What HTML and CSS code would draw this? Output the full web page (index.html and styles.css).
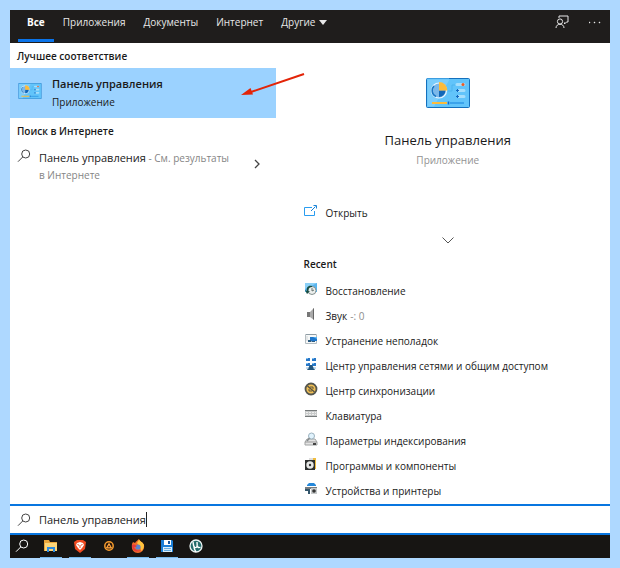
FILE: index.html
```html
<!DOCTYPE html>
<html lang="ru">
<head>
<meta charset="utf-8">
<title>Поиск</title>
<link rel="stylesheet" href="styles.css">
</head>
<body>
<svg class="defs" aria-hidden="true">
  <symbol id="panel" viewBox="0 0 44 30">
    <rect x=".5" y=".5" width="43" height="29" rx="1" fill="#62c4fa" stroke="#1470bd"/>
    <path d="M1.500 1.500h22L8 28.500H1.500z" fill="#8fd6fc" opacity=".55"/>
    <path d="M1 .5h22" stroke="#3c9de0"/>
    <circle cx="13" cy="12.500" r="7.500" fill="#7bb8ea" stroke="#e9f6ff" stroke-width="1.200"/>
    <path d="M13 12.500h6.500A6.500 6.500 0 0 1 13 19z" fill="#1267b8"/>
    <path d="M8 8a6.500 6.500 0 0 0 2 10.500" fill="none" stroke="#1976c5" stroke-width="1.500"/>
    <path d="M13 12.500V4a8.500 8.500 0 0 1 8.500 8.500z" fill="#fdbb3b"/>
    <path d="M22 13h4V7h3" fill="none" stroke="#4db4ee"/>
    <path d="M31 6.500h7M33 12.500h5M33 18.500h5" stroke="#a6defb" stroke-width="3" stroke-linecap="round"/>
    <path d="M30 12.500h3M31.500 11v3M30 18.500h3M31.500 17v3" stroke="#1268c0"/>
    <circle cx="37" cy="6.500" r="1.500" fill="#ed5a24"/>
    <path d="M6 25h15" stroke="#fdbb3b" stroke-width="2"/>
    <path d="M24 25h14" stroke="#1482dc"/>
    <path d="M22.500 23.500v3" stroke="#1268c0" stroke-width="1.500"/>
  </symbol>
  <symbol id="lens" viewBox="0 0 14 14">
    <circle cx="8.700" cy="5" r="4" fill="none" stroke="currentColor"/>
    <path d="M5.800 7.900 1 12.700" stroke="currentColor" fill="none"/>
  </symbol>
</svg>

<div class="window">
  <header class="topbar">
    <nav class="tabs">
      <a class="tab active" href="#">Все</a>
      <a class="tab" href="#">Приложения</a>
      <a class="tab" href="#">Документы</a>
      <a class="tab" href="#">Интернет</a>
      <a class="tab" href="#">Другие <svg class="caret" viewBox="0 0 8 5"><path d="M0 0h8L4 5z" fill="currentColor"/></svg></a>
    </nav>
    <div class="tools">
      <button class="tool" type="button" aria-label="Отзыв">
        <svg width="14" height="14" viewBox="0 0 14 14" fill="none" stroke="currentColor"><path d="M4 3V1h9v6h-1.500L9.500 9V7.500"/><circle cx="5" cy="6.500" r="2.600"/><path d="M1 13c0-5 8-5 8 0"/></svg>
      </button>
      <button class="tool" type="button" aria-label="Ещё">
        <svg width="12" height="14" viewBox="0 0 12 14" fill="currentColor"><path d="M0 7h1v1H0zM5 7h1v1H5zM10 7h1v1h-1z" stroke="currentColor" stroke-width=".4"/></svg>
      </button>
    </div>
  </header>

  <main class="content">
    <section class="results">
      <h2 class="heading">Лучшее соответствие</h2>
      <a class="best" href="#">
        <svg class="best-icon" viewBox="0 0 44 30"><use href="#panel"/></svg>
        <span class="best-text"><strong class="best-name">Панель управления</strong><span class="best-kind">Приложение</span></span>
        <svg class="pointer" viewBox="0 0 64 24" aria-hidden="true"><path d="M63 1 10 19" stroke="#e32408" stroke-width="2"/><path d="M0 22 9.500 15l2.500 6.500z" fill="#e32408"/></svg>
      </a>
      <h2 class="heading">Поиск в Интернете</h2>
      <a class="web" href="#">
        <svg class="lens" viewBox="0 0 14 14"><use href="#lens"/></svg>
        <span class="web-text"><span class="web-query">Панель управления</span> - См. результаты в&nbsp;Интернете</span>
        <svg class="next" viewBox="0 0 6 10"><path d="M1 1l4 4-4 4" fill="none" stroke="currentColor" stroke-width="1.300"/></svg>
      </a>
    </section>

    <section class="details">
      <div class="hero">
        <svg class="hero-icon" viewBox="0 0 44 30"><use href="#panel"/></svg>
        <h1 class="hero-name">Панель управления</h1>
        <p class="hero-kind">Приложение</p>
      </div>
      <a class="item" href="#">
        <svg class="icon" viewBox="0 0 14 14" fill="none" stroke="#2a9df0"><path d="M8 3.500H.5v8h10V7"/><path d="M7 7l4.500-4.500M9.500 1.500h3v3" stroke="#1883d8"/></svg>
        Открыть
      </a>
      <button class="expand" type="button" aria-label="Развернуть"><svg width="12" height="7" viewBox="0 0 12 7"><path d="M.5.5 6 6 11.500.5" fill="none" stroke="currentColor"/></svg></button>
      <h2 class="recent">Recent</h2>
      <ul class="list">
        <li><a class="item" href="#"><svg class="icon" viewBox="0 0 14 14"><path d="M1 1h12v9H1z" fill="#59b4ee"/><path d="M1 1h12L1 7z" fill="#8bd0f7"/><circle cx="8" cy="8.500" r="4" fill="#ecefed" stroke="#84908f"/><path d="M8 6v3l2-1" fill="none" stroke="#66716e"/><path d="M8 4C4 3 2 6 3 9L1 8l2 4 3-3-1.500.2C4 7 5 5 8 5z" fill="#174e43"/></svg>Восстановление</a></li>
        <li><a class="item" href="#"><svg class="icon" viewBox="0 0 14 14"><path d="M3 5h3v5H3z" fill="#777"/><path d="M6 5l4-4v12l-4-3z" fill="#aaa"/><path d="M9.500 1.500v11" stroke="#666"/></svg>Звук <span class="note">-: 0</span></a></li>
        <li><a class="item" href="#"><svg class="icon" viewBox="0 0 14 14"><path d="M1.500 2.500h11v9h-11z" fill="#f6f8f8" stroke="#b5bdc1"/><path d="M2 2.500h10" stroke="#8e9ca4"/><path d="M6 5h7v4H6z" fill="#1f77cc"/><path d="M9 5h4v2z" fill="#59b5f3"/><path d="M4 8h3v2H4zM8 9h3v1H7z" fill="#2d5c82"/><path d="M3 4v5" stroke="#d0d5d7"/></svg>Устранение неполадок</a></li>
        <li><a class="item" href="#"><svg class="icon" viewBox="0 0 14 14"><path d="M2 1h4v3H2zM8 1h4v3H8zM2 6h4v3H2zM8 6h4v3H8z" fill="#2877c7"/><path d="M2 1h2v1H2zM8 1h2v1H8zM2 6h2v1H2zM8 6h2v1H8z" fill="#7fc0f2"/><path d="M6 8h2l3 5H3z" fill="#25577d"/><path d="M2 11h3M9 11h3" stroke="#8dbadb"/></svg>Центр управления сетями и общим доступом</a></li>
        <li><a class="item" href="#"><svg class="icon" viewBox="0 0 14 14"><circle cx="7" cy="7" r="5.500" fill="#f0bf55" stroke="#54564f" stroke-width="1.800"/><path d="M3.500 4 10.500 10" stroke="#5a543f" stroke-width="1.500"/><path d="M6 5h3v2M8 9H5V7" fill="none" stroke="#5a543f"/></svg>Центр синхронизации</a></li>
        <li><a class="item" href="#"><svg class="icon" viewBox="0 0 14 14"><path d="M1 3h12v7H1z" fill="#c8caca"/><path d="M1 3.500h12M1 9.500h12" stroke="#777b7c"/><path d="M2 5.500h10M2 7.500h10" stroke="#eee" stroke-dasharray="2 1"/></svg>Клавиатура</a></li>
        <li><a class="item" href="#"><svg class="icon" viewBox="0 0 14 14"><path d="M3 7h8l2 3v3H1v-3z" fill="#e4e4e4" stroke="#a0a3a3"/><path d="M1 10h12" stroke="#999"/><path d="M9 11h3v2H9z" fill="#444"/><circle cx="7.500" cy="4" r="3" fill="#e1f3fd" stroke="#9cb2bf"/><path d="M5.500 6 3 9" stroke="#858b8d" stroke-width="1.500"/></svg>Параметры индексирования</a></li>
        <li><a class="item" href="#"><svg class="icon" viewBox="0 0 14 14"><path d="M5 1h5l1 2H5z" fill="#ddd"/><path d="M9 1h3v11H9z" fill="#f0bd3e"/><path d="M1 3h10v10H1z" fill="#2e302f"/><circle cx="6" cy="8" r="3.700" fill="#e7e8e7"/><circle cx="6" cy="8" r="1.200" fill="#333"/></svg>Программы и компоненты</a></li>
        <li><a class="item" href="#"><svg class="icon" viewBox="0 0 14 14"><path d="M3 3l2-2h5l2 2v1H3z" fill="#2588da"/><path d="M1 5h12v2H1z" fill="#777d80"/><path d="M1 7h3v2H1zM4 7h2v5H4z" fill="#34566c"/><path d="M7 6h6v6H7z" fill="#c6c9ca"/><circle cx="10" cy="9" r="1.800" fill="#333"/></svg>Устройства и принтеры</a></li>
      </ul>
    </section>
  </main>

  <form class="search">
    <label class="search-label" for="query" aria-label="Поиск"><svg class="lens" viewBox="0 0 14 14"><use href="#lens"/></svg></label>
    <input class="query" id="query" type="text" value="Панель управления">
  </form>

  <footer class="taskbar">
    <button class="app" type="button" aria-label="Поиск"><svg class="lens" viewBox="0 0 14 14"><use href="#lens"/></svg></button>
    <button class="app open" type="button" aria-label="Проводник"><svg class="app-icon" viewBox="0 0 14 14"><path d="M0 1h5l1 2h7v9H0z" fill="#e9a53b"/><path d="M1 4h12v8H1z" fill="#fcd579"/><path d="M3 13V8h8v5H9v-3H5v3z" fill="#2c8be0"/></svg></button>
    <button class="app open" type="button" aria-label="Brave"><svg class="app-icon" viewBox="0 0 14 14"><path d="M4 1h6l3 2-1 7-5 4-5-4-1-7z" fill="#f04a20"/><path d="M4 4l3-1 3 1 1 2-2 3-2 2-2-2-2-3z" fill="#fff"/><path d="M4.500 5.500l1.500.7M9.500 5.500 8 6.200M7 6v3" stroke="#f04a20"/></svg></button>
    <button class="app" type="button" aria-label="AIMP"><svg class="app-icon" viewBox="0 0 14 14"><circle cx="7" cy="7" r="4.200" fill="#26150b" stroke="#f69b2c" stroke-width="1.500"/><path d="M7 4.500 9.500 9h-5z" fill="#e97b20" stroke="#ffb04a"/><circle cx="7" cy="7.500" r=".8" fill="#26150b"/></svg></button>
    <button class="app open" type="button" aria-label="Firefox"><svg class="app-icon" viewBox="0 0 14 14"><path d="M1 5l1-2 2 1c1-2 3-3 4-4 0 2 4 3 5 6 1 5-3 8-6 8C3 14 0 11 1 5z" fill="#f26a28"/><path d="M8 0c0 2 4 3 5 6 0 3-1 5-3 6 0-4-2-5-4-8 1-2 2-3 2-4z" fill="#ffc33d"/><circle cx="7" cy="8" r="2.600" fill="#5b83cd"/><path d="M1 6c2-1 3 0 5 1-1 1-2 1-3 1 1 3 4 4 7 3-3 3-9 2-9-5z" fill="#e53a3c"/></svg></button>
    <button class="app open" type="button" aria-label="Сохранение"><svg class="app-icon" viewBox="0 0 14 14"><path d="M1 1h11l1 1v11H1z" fill="#1b7ed6"/><path d="M4 1h7v5H4z" fill="#fff"/><path d="M8 2h2v3H8z" fill="#1456a0"/><path d="M3 8h9v5H3z" fill="#d8edfb"/><path d="M4 9.500h7M4 11.500h7" stroke="#67aee2"/></svg></button>
    <button class="app" type="button" aria-label="uTorrent"><svg class="app-icon" viewBox="0 0 14 14"><circle cx="7" cy="7" r="6" fill="#246b6b" stroke="#edf5f5" stroke-width="1.300"/><path d="M4 3c.5 2 .2 5 2 5.500 2 .5 2.500-1 2-5.500M8.500 7c.5 2 1.500 2 3 1M5 8c0 2 1 3 2 5" fill="none" stroke="#fff" stroke-width="1.400"/></svg></button>
  </footer>
</div>
</body>
</html>
```
FILE: styles.css
```css
* { box-sizing: border-box; }

body {
  margin: 0;
  padding: 10px;
  background: #aed8ff;
  color: #1a1a1a;
  font: 10px/14px "Open Sans", "Noto Sans", sans-serif;
}

a { color: inherit; text-decoration: none; }
button { padding: 0; border: 0; background: none; color: inherit; }
h1, h2, p, ul { margin: 0; padding: 0; font-weight: 400; }
svg { display: block; flex: none; }
.defs { position: absolute; width: 0; height: 0; }

.window {
  display: flex;
  flex-direction: column;
  min-height: calc(100vh - 20px);
  background: #fff;
}

.topbar {
  display: flex;
  justify-content: space-between;
  height: 33px;
  padding: 0 9px 0 8px;
  background: #1f1d1c;
  color: #e8e8e8;
}
.tabs { display: flex; }
.tab {
  display: flex;
  gap: 4px;
  padding: 5px 9px 0;
  border-bottom: 3px solid transparent;
  margin-bottom: 1px;
}
.active { border-color: #0a74ea; color: #fff; font-weight: 700; }
.caret { width: 8px; height: 5px; margin-top: 5px; }
.tools { display: flex; gap: 20px; align-items: flex-start; padding-top: 5px; }

.content {
  display: grid;
  flex: 1;
  grid-template-columns: minmax(0, 9fr) minmax(0, 11fr);
  gap: 10px;
}

.heading { padding: 6px 7px 5px; font-size: 10px; font-weight: 600; }

.best {
  position: relative;
  display: flex;
  gap: 10px;
  align-items: center;
  height: 50px;
  padding: 0 8px;
  background: #9bd2ff;
}
.best-icon { width: 24px; height: 16px; margin-bottom: 5px; }
.best-text { display: flex; flex-direction: column; gap: 4px; }
.best-name { font-size: 11px; font-weight: 600; }
.pointer { position: absolute; top: 5px; right: -29px; width: 64px; height: 24px; }

.web { display: flex; gap: 8px; padding: 6px 16px 0 7px; color: #858585; }
.lens { width: 14px; height: 14px; color: #444; }
.web-text { flex: 1; padding-right: 16px; line-height: 17px; }
.web-query { color: #222; font-size: 11px; }
.next { width: 6px; height: 10px; margin-top: 10px; color: #444; }

.details { padding: 35px 0 0 18px; }
.hero {
  display: flex;
  flex-direction: column;
  align-items: center;
  margin: 0 0 33px -18px;
}
.hero-icon { width: 44px; height: 30px; }
.hero-name { margin: 23px 0 4px; font-size: 13px; line-height: 18px; }
.hero-kind { color: #929292; }

.item { display: flex; gap: 8px; align-items: center; height: 25px; }
.icon { width: 14px; height: 14px; margin-bottom: 3px; }
.note { color: #8d8d8d; margin-left: -5px; }
.expand { display: flex; justify-content: center; width: calc(100% + 18px); margin: 12px 0 13px -18px; color: #555; }
.recent { margin-bottom: 7px; font-size: 10px; font-weight: 600; }
.list { list-style: none; }

.search {
  display: flex;
  gap: 8px;
  align-items: center;
  height: 31px;
  padding: 0 7px;
  border: solid #0876e0;
  border-width: 2px 0;
}
.query {
  field-sizing: content;
  height: 15px;
  padding: 0;
  border: 0;
  border-right: 1px solid #222;
  outline: 0;
  background: none;
  color: #222;
  font: 11px/15px "Open Sans", "Noto Sans", sans-serif;
}

.taskbar { display: flex; gap: 7px; height: 23px; padding-left: 1px; background: #171513; }
.app {
  display: flex;
  align-items: center;
  justify-content: center;
  width: 22px;
  border-bottom: 1px solid transparent;
}
.app .lens { color: #fff; }
.app-icon { width: 14px; height: 14px; }
.open { border-color: #76b9ed; }
```
